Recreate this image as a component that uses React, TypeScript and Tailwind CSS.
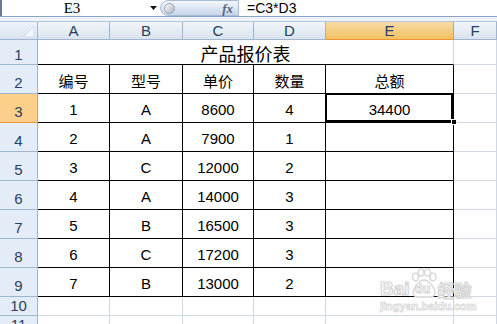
import React from 'react';

const colHeads = ['A', 'B', 'C', 'D', 'E', 'F'];

const rows: string[][] = [
  ['编号', '型号', '单价', '数量', '总额'],
  ['1', 'A', '8600', '4', '34400'],
  ['2', 'A', '7900', '1', ''],
  ['3', 'C', '12000', '2', ''],
  ['4', 'A', '14000', '3', ''],
  ['5', 'B', '16500', '3', ''],
  ['6', 'C', '17200', '3', ''],
  ['7', 'B', '13000', '2', ''],
];

const FormulaBar: React.FC = () => (
  <div className="flex h-[17px] border-b border-[#8ba4c3] bg-white">
    {/* name box */}
    <div className="flex w-[146px] items-center justify-center border-l-2 border-[#6b7b8f] pr-[4px] font-['Liberation_Serif',serif] text-[15px] leading-none text-black">
      E3
    </div>
    <div className="flex w-[14px] items-center justify-center">
      <svg width="7" height="4" viewBox="0 0 7 4">
        <path d="M0 0h7L3.5 4z" fill="#111" />
      </svg>
    </div>
    {/* fx pill */}
    <div className="flex h-[16px] w-[79px] items-center justify-between rounded-l-full border border-[#a9bcd6] bg-gradient-to-b from-[#f4f7fc] via-[#dde6f3] to-[#c9d7ea] pl-[3px] pr-[5px]">
      <div className="h-[11px] w-[11px] rounded-full border border-[#9aa3ad] bg-gradient-to-br from-[#ffffff] to-[#aab3bd]" />
      <span className="font-['Liberation_Serif',serif] text-[13px] font-bold italic leading-none text-[#5a6675]">fx</span>
    </div>
    <div className="ml-[8px] flex items-center font-['Liberation_Sans',sans-serif] text-[14px] leading-none text-black">
      =C3*D3
    </div>
  </div>
);

const Watermark: React.FC = () => (
  <div className="pointer-events-none absolute left-[380px] top-[268px] flex flex-col items-start">
    <div className="flex items-end">
      <span className="font-['Liberation_Sans',sans-serif] text-[19px] font-bold leading-none text-white [-webkit-text-stroke:1.2px_#d6d6d6]">
        Bai
      </span>
      <div className="relative ml-[1px] h-[30px] w-[26px]">
        <svg className="absolute left-0 top-0" width="26" height="30" viewBox="0 0 26 30">
          <g fill="#fff" stroke="#d6d6d6" strokeWidth="1.3">
            <ellipse cx="4.5" cy="9" rx="3" ry="3.8" />
            <ellipse cx="10" cy="4.5" rx="3" ry="3.6" />
            <ellipse cx="16.5" cy="4.5" rx="3" ry="3.6" />
            <ellipse cx="22" cy="9" rx="3" ry="3.8" />
            <path d="M13 12c5 0 11 8 11 13 0 3-3 4-5 4H7c-2 0-5-1-5-4 0-5 6-13 11-13z" />
          </g>
        </svg>
        <span className="absolute bottom-[3px] left-[4px] font-['Liberation_Sans',sans-serif] text-[13px] font-bold leading-none text-white [-webkit-text-stroke:1px_#d6d6d6]">
          du
        </span>
      </div>
      <span className="ml-[1px] font-['Noto_Sans_CJK_SC',sans-serif] text-[17px] font-bold leading-none text-white [-webkit-text-stroke:1.2px_#d6d6d6]">
        经验
      </span>
    </div>
    <span className="mt-[3px] font-['Liberation_Sans',sans-serif] text-[11px] font-bold leading-none text-white [-webkit-text-stroke:0.8px_#dadada]">
      jingyan.baidu.com
    </span>
  </div>
);

const App: React.FC = () => {
  return (
    <div className="relative h-[324px] w-[497px] overflow-hidden bg-white font-['Liberation_Sans','Noto_Sans_CJK_SC',sans-serif]">
      <FormulaBar />
      <div className="h-[5px] border-b border-[#b6c7dc] bg-[#eef3f9]" />

      <div className="grid grid-cols-[38px_72px_73px_71px_72px_128px_1fr]">
        {/* column headers */}
        <div className="relative h-[18px] border-b border-r border-[#9eb6ce] bg-gradient-to-b from-[#eef3fa] to-[#d9e3ef]">
          <svg className="absolute bottom-[2px] right-[3px]" width="11" height="11" viewBox="0 0 11 11">
            <path d="M11 0v11H0z" fill="#f2f5f9" stroke="#b4c2d3" strokeWidth="0.5" />
          </svg>
        </div>
        {colHeads.map((c) =>
          c === 'E' ? (
            <div
              key={c}
              className="flex h-[18px] items-center justify-center border-b border-r border-[#f29536] bg-gradient-to-b from-[#f9dca6] to-[#f1c15f] text-[15px] leading-none text-[#27415f]"
            >
              {c}
            </div>
          ) : (
            <div
              key={c}
              className="flex h-[18px] items-center justify-center border-b border-r border-[#9eb6ce] bg-gradient-to-b from-[#f2f6fa] to-[#dae3ee] text-[15px] leading-none text-[#27415f]"
            >
              {c}
            </div>
          )
        )}

        {/* row 1: title */}
        <div className="flex h-[25px] items-end justify-center border-b border-r border-[#9eb6ce] bg-[#e4ecf7] pb-[2px] text-[15px] leading-none text-[#27415f]">
          1
        </div>
        <div className="col-span-5 flex h-[25px] items-center justify-center border-b border-r border-b-black border-r-[#d0d7e5] pt-[2px] font-['Noto_Sans_CJK_SC',sans-serif] text-[18px] leading-none text-black">
          产品报价表
        </div>
        <div className="h-[25px] border-b border-r border-[#d0d7e5]" />

        {/* rows 2-9: table */}
        {rows.map((r, i) => (
          <React.Fragment key={i}>
            {i === 1 ? (
              <div className="flex h-[29px] items-end justify-center border-b border-r border-[#f29536] bg-[#fcd08a] pb-[3px] text-[15px] leading-none text-[#27415f]">
                {i + 2}
              </div>
            ) : (
              <div className="flex h-[29px] items-end justify-center border-b border-r border-[#9eb6ce] bg-[#e4ecf7] pb-[3px] text-[15px] leading-none text-[#27415f]">
                {i + 2}
              </div>
            )}
            {r.map((v, j) =>
              i === 1 && j === 4 ? (
                <div key={j} className="relative flex h-[29px] items-center justify-center border-b border-r border-black pt-[3px] text-[15px] leading-none text-black">
                  {v}
                  <div className="absolute -left-[1px] -top-[1px] bottom-0 right-0 border-2 border-black">
                    <div className="h-full w-full border border-white" />
                  </div>
                  <div className="absolute -bottom-[3px] -right-[4px] h-[6px] w-[6px] border border-white bg-black" />
                </div>
              ) : (
                <div
                  key={j}
                  className={`flex h-[29px] items-center justify-center border-b border-r border-black pt-[3px] text-[15px] leading-none text-black ${
                    i === 0 ? "font-['Noto_Sans_CJK_SC',sans-serif] text-[14px]" : ''
                  }`}
                >
                  {v}
                </div>
              )
            )}
            <div className="h-[29px] border-b border-r border-[#d0d7e5]" />
          </React.Fragment>
        ))}

        {/* row 10 */}
        <div className="flex h-[19px] items-end justify-center border-b border-r border-[#9eb6ce] bg-[#e4ecf7] pb-[2px] text-[15px] leading-none text-[#27415f]">
          10
        </div>
        {colHeads.map((c) => (
          <div key={c} className="h-[19px] border-b border-r border-[#d0d7e5]" />
        ))}

        {/* row 11 */}
        <div className="flex h-[19px] items-end justify-center border-b border-r border-[#9eb6ce] bg-[#e4ecf7] pb-[2px] text-[15px] leading-none text-[#27415f]">
          11
        </div>
        {colHeads.map((c) => (
          <div key={c} className="h-[19px] border-b border-r border-[#d0d7e5]" />
        ))}
      </div>

      <Watermark />
    </div>
  );
};

export default App;
